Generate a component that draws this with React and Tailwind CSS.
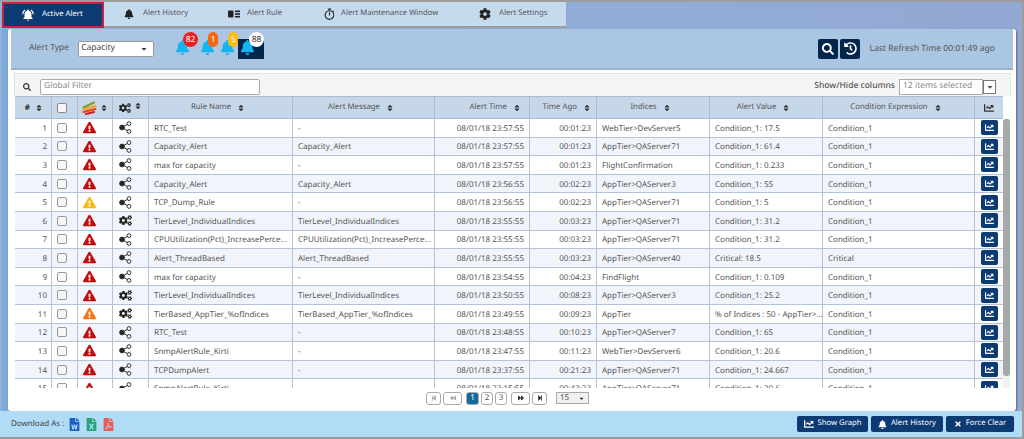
import React from 'react';
import { FaBell, FaCog, FaCogs, FaSearch, FaHistory, FaChartLine, FaSort, FaTimes, FaExclamationTriangle, FaCaretDown, FaStepBackward, FaStepForward, FaBackward, FaForward, FaFileWord, FaFileExcel, FaFilePdf } from 'react-icons/fa';
import { MdNotificationsActive, MdOutlineTimer } from 'react-icons/md';

const cols = 'grid grid-cols-[37px_26px_35px_36px_144px_142px_95px_67px_113px_113px_152px_28px]';
const leftCell = 'flex items-center pl-[5px] pt-[2px] border-r border-[#b4c3d6] whitespace-nowrap overflow-hidden';
const rightCell = 'flex items-center justify-end pr-[5px] pt-[2px] border-r border-[#b4c3d6]';

const rows = [
  [1, 'r', 's', 'RTC_Test', '-', '23:57:55', '00:01:23', 'WebTier>DevServer5', 'Condition_1: 17.5', 'Condition_1'],
  [2, 'r', 's', 'Capacity_Alert', 'Capacity_Alert', '23:57:55', '00:01:23', 'AppTier>QAServer71', 'Condition_1: 61.4', 'Condition_1'],
  [3, 'r', 's', 'max for capacity', '-', '23:57:55', '00:01:23', 'FlightConfirmation', 'Condition_1: 0.233', 'Condition_1'],
  [4, 'r', 's', 'Capacity_Alert', 'Capacity_Alert', '23:56:55', '00:02:23', 'AppTier>QAServer3', 'Condition_1: 55', 'Condition_1'],
  [5, 'y', 's', 'TCP_Dump_Rule', '-', '23:56:55', '00:02:23', 'AppTier>QAServer71', 'Condition_1: 5', 'Condition_1'],
  [6, 'r', 'c', 'TierLevel_IndividualIndices', 'TierLevel_IndividualIndices', '23:55:55', '00:03:23', 'AppTier>QAServer71', 'Condition_1: 31.2', 'Condition_1'],
  [7, 'r', 's', 'CPUUtilization(Pct)_IncreasePerce...', 'CPUUtilization(Pct)_IncreasePerce...', '23:55:55', '00:03:23', 'AppTier>QAServer71', 'Condition_1: 31.2', 'Condition_1'],
  [8, 'r', 's', 'Alert_ThreadBased', 'Alert_ThreadBased', '23:55:55', '00:03:23', 'AppTier>QAServer40', 'Critical: 18.5', 'Critical'],
  [9, 'r', 's', 'max for capacity', '-', '23:54:55', '00:04:23', 'FindFlight', 'Condition_1: 0.109', 'Condition_1'],
  [10, 'r', 'c', 'TierLevel_IndividualIndices', 'TierLevel_IndividualIndices', '23:50:55', '00:08:23', 'AppTier>QAServer3', 'Condition_1: 25.2', 'Condition_1'],
  [11, 'o', 'c', 'TierBased_AppTier_%ofIndices', 'TierBased_AppTier_%ofIndices', '23:49:55', '00:09:23', 'AppTier', '% of Indices : 50 - AppTier>...', 'Condition_1'],
  [12, 'r', 's', 'RTC_Test', '-', '23:48:55', '00:10:23', 'AppTier>QAServer7', 'Condition_1: 65', 'Condition_1'],
  [13, 'r', 's', 'SnmpAlertRule_Kirti', '-', '23:47:55', '00:11:23', 'WebTier>DevServer6', 'Condition_1: 20.6', 'Condition_1'],
  [14, 'r', 's', 'TCPDumpAlert', '-', '23:37:55', '00:21:23', 'AppTier>QAServer71', 'Condition_1: 24.667', 'Condition_1'],
  [15, 'r', 's', 'SnmpAlertRule_Kirti', '-', '23:15:55', '00:43:23', 'AppTier>QAServer71', 'Condition_1: 20.6', 'Condition_1'],
];

const sevColor = { r: 'text-[#c00d0d]', y: 'text-[#fdb913]', o: 'text-[#f9730f]' };

function ShareIcon() {
  return (
    <svg width="13" height="13" viewBox="0 0 13 13" fill="none" stroke="#333" strokeWidth="1">
      <path d="M3 6.5 L9.5 2.8 M3 6.5 L9.5 10.2" />
      <circle cx="3" cy="6.5" r="2.4" fill="#222" />
      <circle cx="10" cy="2.6" r="1.9" fill="#fff" />
      <circle cx="10" cy="10.4" r="1.9" fill="#fff" />
    </svg>
  );
}

function RuleIcon() {
  return (
    <svg width="12" height="8" viewBox="0 0 12 8" fill="#222">
      <rect x="0" y="0.5" width="5.5" height="7" rx="1" />
      <rect x="7" y="0.5" width="5" height="1.6" />
      <rect x="7" y="3.2" width="5" height="1.6" />
      <rect x="7" y="5.9" width="5" height="1.6" />
    </svg>
  );
}

function StackIcon() {
  return (
    <svg width="15" height="14" viewBox="0 0 15 14" fill="none" strokeWidth="2" strokeLinecap="round">
      <path d="M1.5 6.5 L12 1.5" stroke="#7c9a2d" />
      <path d="M1.5 8.5 L13.5 5" stroke="#f5a31a" />
      <path d="M1.5 11 L13.5 8" stroke="#e8401c" />
      <path d="M4 13 L12 11" stroke="#c9201c" />
    </svg>
  );
}

function Tab({ icon, label, w, gap }) {
  return (
    <div className={`${w} ${gap} flex items-center pl-[20px] whitespace-nowrap`}>
      {icon}
      <span>{label}</span>
    </div>
  );
}

function Bell({ count, badge, text = 'text-white', active }) {
  return (
    <div className={`relative h-[20px] ${active ? 'w-[26px] pl-[2px] bg-[#03264a]' : 'w-[21px] pl-[3px]'}`}>
      <FaBell className="text-[#12b5f2] text-[15px] mt-[1px]" />
      <span className={`absolute top-[-7px] left-[11px] h-[15px] rounded-full text-[8.5px] leading-[15px] text-center ${badge} ${text}`}>{count}</span>
    </div>
  );
}

function SortHead({ label, justify = 'justify-center pr-[5px]' }) {
  return (
    <div className={`flex items-center gap-[6px] whitespace-nowrap border-r border-[#a9bcd2] text-[7.8px] ${justify}`}>
      <span>{label}</span>
      <FaSort className="text-[8px] text-[#333]" />
    </div>
  );
}

function PageBtn({ children, className = '' }) {
  return (
    <div className={`h-[13px] flex items-center justify-center rounded-[3px] border border-[#aaa] ${className}`}>{children}</div>
  );
}

function DarkBtn({ icon, label, w }) {
  return (
    <div className={`${w} h-[16px] rounded-[2px] bg-[#0c3a72] text-white flex items-center justify-center gap-[4px] text-[7.7px]`}>
      {icon}
      <span>{label}</span>
    </div>
  );
}

export default function App() {
  return (
    <div className="w-[1024px] h-[439px] overflow-hidden flex flex-col border-t-2 border-r-2 border-b-2 border-[#9c9c9c] bg-gradient-to-r from-[#8db3dc] to-[#93a8d2] font-['Roboto',sans-serif] text-[8px] text-[#555] [text-rendering:geometricPrecision]">
      <div className="h-[27px] flex shrink-0 pl-[2px] text-[7.7px]">
        <div className="w-[102px] h-[26px] flex items-center gap-[7px] pl-[17px] bg-[#0c3a72] text-white border-2 border-[#c9213f] whitespace-nowrap">
          <MdNotificationsActive className="text-[14px]" />
          <span>Active Alert</span>
        </div>
        <div className="w-[462px] flex border-b-2 border-[#9c9c9c] bg-[#c6daee] h-[26px]">
          <Tab w="w-[104px]" gap="gap-[9px]" label="Alert History" icon={<FaBell className="text-[10px] text-[#222]" />} />
          <Tab w="w-[95px]" gap="gap-[7px]" label="Alert Rule" icon={<RuleIcon />} />
          <Tab w="w-[156px]" gap="gap-[5px]" label="Alert Maintenance Window" icon={<MdOutlineTimer className="text-[13px] text-[#222]" />} />
          <Tab w="w-[107px]" gap="gap-[8px]" label="Alert Settings" icon={<FaCog className="text-[12px] text-[#222]" />} />
        </div>
      </div>

      <div className="flex-1 min-h-0 flex pl-[2px]">
        <div className="w-[6px] bg-[#7ca9d8] shrink-0" />
        <div className="w-[1008px] h-[382px] flex flex-col rounded-[3px] bg-white shadow-[1px_1px_2px_#667] overflow-hidden pl-[3px] pr-[3px]">
          <div className="h-[41px] shrink-0 flex items-center bg-[#abc6e3] border-b-2 border-[#94b2d2] pl-[18px] pr-[18px]">
            <span className="text-[8.5px] whitespace-nowrap">Alert Type</span>
            <div className="ml-[9px] w-[76px] h-[16px] shrink-0 flex items-center justify-between rounded-[2px] border border-[#999] bg-white pl-[2px] pr-[5px] text-[#444]">
              <span className="text-[8.5px]">Capacity</span>
              <FaCaretDown className="text-[8px]" />
            </div>
            <div className="ml-[18px] flex">
              <Bell count="82" badge="bg-[#ee1c1c] w-[15px]" />
              <div className="w-[4px]" />
              <Bell count="1" badge="bg-[#f9650f] w-[10px]" />
              <div className="ml-[-1px]" />
              <Bell count="5" badge="bg-[#fdb913] w-[10px] z-10" />
              <Bell count="88" badge="bg-white w-[15px]" text="text-[#333]" active />
            </div>
            <div className="ml-auto flex items-center">
              <div className="w-[20px] h-[20px] rounded-[2px] bg-[#03264a] text-white flex items-center justify-center"><FaSearch className="text-[12px]" /></div>
              <div className="ml-[2px] w-[20px] h-[20px] rounded-[2px] bg-[#03264a] text-white flex items-center justify-center"><FaHistory className="text-[13px]" /></div>
              <span className="ml-[9px] text-[8.6px] whitespace-nowrap">Last Refresh Time 00:01:49 ago</span>
            </div>
          </div>

          <div className="flex-1 min-h-0 flex flex-col bg-white pt-[3px] pl-[3px] pr-[2px]">
            <div className="h-[23px] shrink-0 flex items-center pt-[3px] bg-[#f4f4f4] border border-[#e2e2e2] border-b-0 pl-[8px] pr-[14px] text-[8.5px]">
              <FaSearch className="text-[8px] text-[#333]" />
              <div className="ml-[9px] w-[220px] h-[16px] flex items-center rounded-[2px] border border-[#aaa] bg-white pl-[3px] text-[#888]">Global Filter</div>
              <span className="ml-auto font-medium whitespace-nowrap">Show/Hide columns</span>
              <div className="ml-[4px] w-[84px] h-[16px] flex items-center border border-[#aaa] bg-white pl-[3px] text-[#888] whitespace-nowrap">12 items selected</div>
              <div className="w-[13px] h-[14px] flex items-center justify-center border border-[#777] bg-white"><FaCaretDown className="text-[8px]" /></div>
            </div>

            <div className="h-[23px] shrink-0 w-[988px] ml-[1px] bg-[#c6d7e9] border-t border-b border-[#a9bcd2] grid grid-cols-[37px_26px_35px_36px_144px_142px_95px_67px_113px_113px_152px_28px]">
              <div className="flex items-center justify-end gap-[5px] pr-[8px] border-r border-[#a9bcd2]"><span className="font-bold text-[#333]">#</span><FaSort className="text-[8px] text-[#333]" /></div>
              <div className="flex items-center pl-[5px] border-r border-[#a9bcd2]"><div className="w-[10px] h-[10px] rounded-[2px] border border-[#888] bg-[#f5f5f5]" /></div>
              <div className="flex items-center pl-[4px] gap-[3px] border-r border-[#a9bcd2]"><StackIcon /><FaSort className="text-[8px] text-[#333]" /></div>
              <div className="flex items-center pl-[6px] gap-[3px] border-r border-[#a9bcd2]"><FaCogs className="text-[12px] text-[#222]" /><FaSort className="text-[8px] text-[#333] mb-[3px]" /></div>
              <SortHead label="Rule Name" />
              <SortHead label="Alert Message" />
              <SortHead label="Alert Time" justify="justify-end pr-[8px]" />
              <SortHead label="Time Ago" justify="justify-end pr-[5px]" />
              <SortHead label="Indices" />
              <SortHead label="Alert Value" />
              <SortHead label="Condition Expression" />
              <div className="flex items-center justify-center"><FaChartLine className="text-[10px] text-[#333]" /></div>
            </div>

            <div className="flex-1 min-h-0 flex overflow-hidden ml-[1px]">
              <div className="w-[988px] shrink-0">
                {rows.map((r) => (
                  <div key={r[0]} className={`${cols} h-[18.6px] border-b border-[#b4c3d6] ${r[0] % 2 === 0 ? 'bg-[#f1f5fb]' : 'bg-white'}`}>
                    <div className="flex items-center justify-end pr-[4px] pt-[2px] border-r border-[#b4c3d6]">{r[0]}</div>
                    <div className="flex items-center pl-[5px] border-r border-[#b4c3d6]"><div className="w-[10px] h-[10px] rounded-[2px] border border-[#999] bg-[#f7f7f7]" /></div>
                    <div className="flex items-center pl-[5px] border-r border-[#b4c3d6]"><FaExclamationTriangle className={`text-[13px] ${sevColor[r[1]]}`} /></div>
                    <div className="flex items-center pl-[6px] border-r border-[#b4c3d6]">{r[2] === 's' ? <ShareIcon /> : <FaCogs className="text-[13px] text-[#222]" />}</div>
                    <div className={leftCell}>{r[3]}</div>
                    <div className={leftCell}>{r[4]}</div>
                    <div className={rightCell}>08/01/18 {r[5]}</div>
                    <div className={rightCell}>{r[6]}</div>
                    <div className={leftCell}>{r[7]}</div>
                    <div className={leftCell}>{r[8]}</div>
                    <div className={leftCell}>{r[9]}</div>
                    <div className="flex items-center justify-center"><div className="w-[17px] h-[15px] rounded-[2px] bg-[#0c3a72] flex items-center justify-center"><FaChartLine className="text-[9px] text-white" /></div></div>
                  </div>
                ))}
              </div>
              <div className="w-[7px] shrink-0 bg-[#f1f1f1] flex flex-col">
                <div className="h-[257px] bg-[#a8a8a8] rounded-[3px]" />
              </div>
            </div>

            <div className="h-[23px] shrink-0 flex items-center justify-center pb-[3px] pr-[10px] gap-[2px] bg-white">
              <PageBtn className="w-[15px] text-[#aaa]"><FaStepBackward className="text-[6px]" /></PageBtn>
              <PageBtn className="w-[19px] text-[#aaa]"><FaBackward className="text-[6px]" /></PageBtn>
              <PageBtn className="w-[13px] ml-[2px] bg-[#146a9e] border-[#146a9e] text-white">1</PageBtn>
              <PageBtn className="w-[12px]">2</PageBtn>
              <PageBtn className="w-[12px]">3</PageBtn>
              <PageBtn className="w-[19px] ml-[2px] text-[#333]"><FaForward className="text-[6px]" /></PageBtn>
              <PageBtn className="w-[15px] text-[#333]"><FaStepForward className="text-[6px]" /></PageBtn>
              <div className="ml-[7px] w-[33px] h-[12px] flex items-center justify-between border border-[#aaa] bg-[#f0f0f0] px-[3px]">
                <span>15</span>
                <FaCaretDown className="text-[7px] text-[#333]" />
              </div>
            </div>
          </div>
        </div>
      </div>

      <div className="h-[26px] shrink-0 flex items-center bg-[#b0dcf6] pl-[11px] pr-[8px]">
        <span className="text-[#444]">Download As :</span>
        <div className="ml-[4px] flex items-center gap-[4px] text-[13px]">
          <FaFileWord className="text-[#1d5fc4]" />
          <FaFileExcel className="text-[#2aa27b]" />
          <FaFilePdf className="text-[#ea5a5a]" />
        </div>
        <div className="ml-auto flex items-center gap-[3px]">
          <DarkBtn w="w-[71px]" label="Show Graph" icon={<FaChartLine className="text-[10px]" />} />
          <DarkBtn w="w-[72px]" label="Alert History" icon={<FaBell className="text-[9px]" />} />
          <DarkBtn w="w-[68px]" label="Force Clear" icon={<FaTimes className="text-[8px]" />} />
        </div>
      </div>
    </div>
  );
}
